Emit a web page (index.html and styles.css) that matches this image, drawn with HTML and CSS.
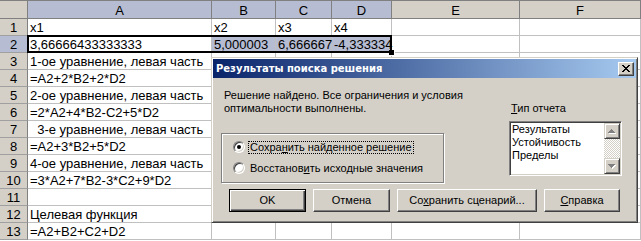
FILE: index.html
```html
<!DOCTYPE html>
<html lang="ru">
<head>
<meta charset="utf-8">
<title>Excel - Поиск решения</title>
<link rel="stylesheet" href="styles.css">
</head>
<body>
<div class="sheet">
  <div class="grid">
    <div class="corner"></div>
    <div class="ch sel">A</div>
    <div class="ch sel">B</div>
    <div class="ch sel">C</div>
    <div class="ch sel">D</div>
    <div class="ch">E</div>
    <div class="ch">F</div>

    <div class="rh">1</div><div class="c">x1</div><div class="c">x2</div><div class="c">x3</div><div class="c">x4</div><div class="c"></div><div class="c"></div>
    <div class="rh sel">2</div><div class="c">3,66666433333333</div><div class="c fill">5,000003</div><div class="c fill">6,666667</div><div class="c fill">-4,333334</div><div class="c"></div><div class="c"></div>
    <div class="rh">3</div><div class="c">1-ое уравнение, левая часть</div><div class="c"></div><div class="c"></div><div class="c"></div><div class="c"></div><div class="c"></div>
    <div class="rh">4</div><div class="c">=A2+2*B2+2*D2</div><div class="c"></div><div class="c"></div><div class="c"></div><div class="c"></div><div class="c"></div>
    <div class="rh">5</div><div class="c">2-ое уравнение, левая часть</div><div class="c"></div><div class="c"></div><div class="c"></div><div class="c"></div><div class="c"></div>
    <div class="rh">6</div><div class="c">=2*A2+4*B2-C2+5*D2</div><div class="c"></div><div class="c"></div><div class="c"></div><div class="c"></div><div class="c"></div>
    <div class="rh">7</div><div class="c">  3-е уравнение, левая часть</div><div class="c"></div><div class="c"></div><div class="c"></div><div class="c"></div><div class="c"></div>
    <div class="rh">8</div><div class="c">=A2+3*B2+5*D2</div><div class="c"></div><div class="c"></div><div class="c"></div><div class="c"></div><div class="c"></div>
    <div class="rh">9</div><div class="c">4-ое уравнение, левая часть</div><div class="c"></div><div class="c"></div><div class="c"></div><div class="c"></div><div class="c"></div>
    <div class="rh">10</div><div class="c">=3*A2+7*B2-3*C2+9*D2</div><div class="c"></div><div class="c"></div><div class="c"></div><div class="c"></div><div class="c"></div>
    <div class="rh">11</div><div class="c"></div><div class="c"></div><div class="c"></div><div class="c"></div><div class="c"></div><div class="c"></div>
    <div class="rh">12</div><div class="c">Целевая функция</div><div class="c"></div><div class="c"></div><div class="c"></div><div class="c"></div><div class="c"></div>
    <div class="rh">13</div><div class="c">=A2+B2+C2+D2</div><div class="c"></div><div class="c"></div><div class="c"></div><div class="c"></div><div class="c"></div>
  </div>

  <div class="selection"><span class="handle"></span></div>

  <div class="dialog">
    <div class="titlebar">
      <span class="title">Результаты поиска решения</span>
      <span class="close">
        <svg width="8" height="7" viewBox="0 0 8 7" shape-rendering="crispEdges"><path fill="#000" d="M0 0h2v1H0z M6 0h2v1H6z M1 1h2v1H1z M5 1h2v1H5z M2 2h4v1H2z M3 3h2v1H3z M2 4h4v1H2z M1 5h2v1H1z M5 5h2v1H5z M0 6h2v1H0z M6 6h2v1H6z"/></svg>
      </span>
    </div>
    <div class="dbody">
      <div class="top">
        <div class="left">
          <p class="msg">Решение найдено. Все ограничения и условия<br>оптимальности выполнены.</p>
          <div class="group">
            <div class="rrow"><span class="radio on"></span><span class="rlbl focus">Сохра<u>н</u>ить найденное решение</span></div>
            <div class="rrow"><span class="radio"></span><span class="rlbl">Восстанов<u>и</u>ть исходные значения</span></div>
          </div>
        </div>
        <div class="right">
          <div class="rtitle"><u>Т</u>ип отчета</div>
          <div class="listbox">
            <div class="items">
              <div>Результаты</div>
              <div>Устойчивость</div>
              <div>Пределы</div>
            </div>
            <div class="vscroll">
              <span class="sbtn">
                <svg width="8" height="5" viewBox="0 0 8 5" shape-rendering="crispEdges"><path fill="#fff" d="M4 1h1v1H4z M3 2h3v1H3z M2 3h5v1H2z M1 4h7v1H1z"/><path fill="#808080" d="M3 0h1v1H3z M2 1h3v1H2z M1 2h5v1H1z M0 3h7v1H0z"/></svg>
              </span>
              <span class="track"></span>
              <span class="sbtn">
                <svg width="8" height="5" viewBox="0 0 8 5" shape-rendering="crispEdges"><path fill="#fff" d="M1 1h7v1H1z M2 2h5v1H2z M3 3h3v1H3z M4 4h1v1H4z"/><path fill="#808080" d="M0 0h7v1H0z M1 1h5v1H1z M2 2h3v1H2z M3 3h1v1H3z"/></svg>
              </span>
            </div>
          </div>
        </div>
      </div>
      <div class="buttons">
        <span class="btn def w77">OK</span>
        <span class="btn w77">Отмена</span>
        <span class="btn w140">Со<u>х</u>ранить сценарий...</span>
        <span class="btn w76"><u>С</u>правка</span>
      </div>
    </div>
  </div>
</div>
</body>
</html>
```

FILE: styles.css
```css
html, body {
  margin: 0;
  padding: 0;
  background: #fff;
}

.sheet {
  position: relative;
  width: 641px;
  height: 241px;
  overflow: hidden;
  font-family: "Liberation Sans", Arial, sans-serif;
  font-size: 13px;
  color: #000;
}

.grid {
  display: grid;
  grid-template-columns: 28px 184px 64px 56px 60px 128px 121px;
  grid-template-rows: 19px repeat(13, 17px);
}

.grid > div {
  box-sizing: border-box;
  white-space: pre;
  overflow: visible;
}

.corner {
  background: #d4d0c8;
  border-top: 1px solid #808080;
  border-right: 1px solid #808080;
  border-bottom: 1px solid #808080;
}

.ch {
  background: #d4d0c8;
  border-top: 1px solid #808080;
  border-right: 1px solid #808080;
  border-bottom: 1px solid #808080;
  text-align: center;
  line-height: 15px;
  padding-top: 2px;
}

.rh {
  background: #d4d0c8;
  border-right: 1px solid #808080;
  border-bottom: 1px solid #a0a0a0;
  text-align: center;
  line-height: 14px;
  padding-top: 2px;
}

.c {
  border-right: 1px solid #c0c0c0;
  border-bottom: 1px solid #c0c0c0;
  line-height: 14px;
  padding: 2px 0 0 2px;
}

.sel {
  background: #b6bdd2;
}

.fill {
  background: #b6bdd2;
}

.selection {
  position: absolute;
  left: 27px;
  top: 35px;
  width: 365px;
  height: 18px;
  box-sizing: border-box;
  border: 2px solid #000;
}

.handle {
  position: absolute;
  right: -5px;
  bottom: -5px;
  width: 5px;
  height: 5px;
  background: #000;
  border: 1px solid #fff;
  border-width: 0 1px 1px 0;
}

/* Dialog window */
.dialog {
  position: absolute;
  left: 211px;
  top: 57px;
  width: 427px;
  height: 166px;
  box-sizing: border-box;
  background: #d4d0c8;
  border: 1px solid;
  border-color: #d4d0c8 #404040 #404040 #d4d0c8;
  box-shadow: inset 1px 1px 0 #fff, inset -1px -1px 0 #808080;
  padding: 1px;
  display: flex;
  flex-direction: column;
  font-family: "Liberation Sans", Arial, sans-serif;
  font-size: 11px;
}

.titlebar {
  height: 19px;
  background: linear-gradient(to right, #0a246a, #a6caf0);
  display: flex;
  align-items: center;
  justify-content: space-between;
  padding: 0 2px 0 3px;
}

.title {
  color: #fff;
  font-family: "DejaVu Sans", Verdana, sans-serif;
  font-weight: bold;
  font-size: 10px;
  line-height: 13px;
}

.close {
  width: 16px;
  height: 14px;
  box-sizing: border-box;
  background: #d4d0c8;
  border: 1px solid;
  border-color: #fff #404040 #404040 #fff;
  box-shadow: inset -1px -1px 0 #808080;
  display: flex;
  align-items: flex-start;
  justify-content: flex-start;
  padding: 2px 0 0 3px;
}

.close svg {
  display: block;
}

.dbody {
  flex: 1;
  display: flex;
  flex-direction: column;
}

.top {
  display: flex;
}

.left {
  width: 224px;
  margin-left: 8px;
  padding-top: 11px;
}

.msg {
  margin: 0 0 0 3px;
  line-height: 13px;
  white-space: nowrap;
}

.group {
  margin-top: 18px;
  width: 223px;
  height: 50px;
  box-sizing: border-box;
  border: 1px solid #808080;
  box-shadow: inset 1px 1px 0 #fff, 1px 1px 0 #fff;
  padding: 6px 0 0 11px;
  display: flex;
  flex-direction: column;
  gap: 7px;
}

.rrow {
  display: flex;
  align-items: center;
  height: 14px;
}

.radio {
  position: relative;
  flex: none;
  width: 12px;
  height: 12px;
  box-sizing: border-box;
  border-radius: 50%;
  background: #fff;
  border: 1px solid;
  border-color: #808080 #fff #fff #808080;
  box-shadow: inset 1px 1px 0 #404040, inset -1px -1px 0 #d4d0c8;
}

.radio.on::after {
  content: "";
  position: absolute;
  left: 3px;
  top: 3px;
  width: 4px;
  height: 4px;
  border-radius: 50%;
  background: #000;
}

.rlbl {
  margin-left: 3px;
  padding: 0 1px;
  border: 1px dotted transparent;
  line-height: 11px;
  white-space: nowrap;
}

.rlbl.focus {
  border-color: #000;
}

.right {
  margin-left: 64px;
  padding-top: 24px;
}

.rtitle {
  padding-left: 2px;
  line-height: 13px;
}

.listbox {
  margin-top: 6px;
  width: 113px;
  height: 55px;
  box-sizing: border-box;
  background: #fff;
  border: 1px solid;
  border-color: #808080 #fff #fff #808080;
  box-shadow: inset 1px 1px 0 #404040, inset -1px -1px 0 #d4d0c8;
  padding: 1px;
  display: flex;
}

.items {
  flex: 1;
  padding-left: 1px;
  line-height: 13px;
}

.vscroll {
  width: 16px;
  display: flex;
  flex-direction: column;
}

.sbtn {
  height: 16px;
  box-sizing: border-box;
  background: #d4d0c8;
  border: 1px solid;
  border-color: #d4d0c8 #404040 #404040 #d4d0c8;
  box-shadow: inset 1px 1px 0 #fff, inset -1px -1px 0 #808080;
  display: flex;
  align-items: center;
  justify-content: center;
}

.sbtn svg {
  display: block;
}

.track {
  flex: 1;
  background: repeating-conic-gradient(#d4d0c8 0 25%, #fff 0 50%) 0 0 / 2px 2px;
}

.buttons {
  display: flex;
  gap: 7px;
  margin: 6px 0 0 16px;
}

.btn {
  height: 23px;
  box-sizing: border-box;
  background: #d4d0c8;
  border: 1px solid;
  border-color: #fff #404040 #404040 #fff;
  box-shadow: inset -1px -1px 0 #808080;
  display: flex;
  align-items: center;
  justify-content: center;
  line-height: 13px;
  white-space: nowrap;
}

.btn.def {
  border-color: #000;
  box-shadow: inset 1px 1px 0 #fff, inset -1px -1px 0 #404040, inset -2px -2px 0 #808080;
}

.w77 { width: 77px; }
.w76 { width: 76px; }
.w140 { width: 140px; }
```
